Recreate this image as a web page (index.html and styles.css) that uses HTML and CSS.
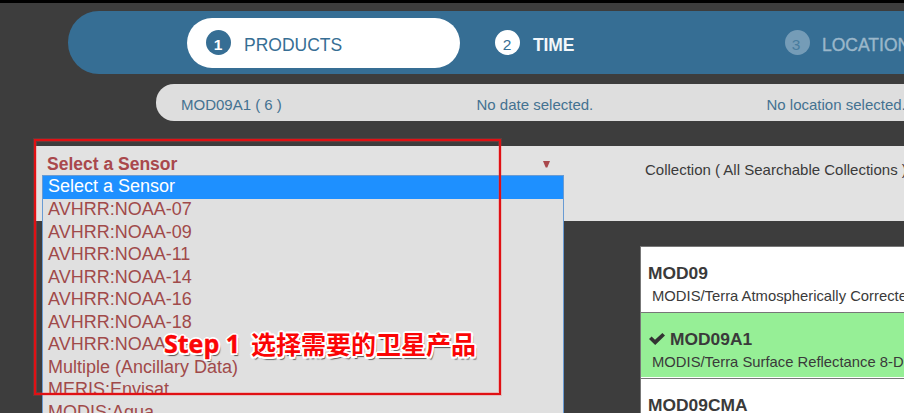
FILE: index.html
```html
<!DOCTYPE html>
<html lang="zh">
<head>
<meta charset="utf-8">
<title>Products</title>
<link rel="stylesheet" href="styles.css">
</head>
<body>
<nav class="steps">
  <div class="step active"><span class="num">1</span><span class="label">PRODUCTS</span></div>
  <div class="step time"><span class="num">2</span><span class="label">TIME</span></div>
  <div class="step disabled"><span class="num">3</span><span class="label">LOCATION</span></div>
</nav>
<div class="status">
  <span class="status-product">MOD09A1 ( 6 )</span>
  <span class="status-date">No date selected.</span>
  <span class="status-location">No location selected.</span>
</div>
<section class="filters">
  <div class="sensor">
    <span>Select a Sensor</span>
    <svg class="arrow" width="7" height="7" viewBox="0 0 7 7"><path d="M0 0H7L4.3 6.5H2.7Z" fill="#a9484c"/></svg>
    <ul class="options">
      <li class="selected">Select a Sensor</li>
      <li>AVHRR:NOAA-07</li>
      <li>AVHRR:NOAA-09</li>
      <li>AVHRR:NOAA-11</li>
      <li>AVHRR:NOAA-14</li>
      <li>AVHRR:NOAA-16</li>
      <li>AVHRR:NOAA-18</li>
      <li>AVHRR:NOAA</li>
      <li>Multiple (Ancillary Data)</li>
      <li>MERIS:Envisat</li>
      <li>MODIS:Aqua</li>
    </ul>
  </div>
  <div class="collection">Collection ( All Searchable Collections )</div>
</section>
<main class="products">
  <article class="product"><h2>MOD09</h2><p>MODIS/Terra Atmospherically Corrected</p></article>
  <article class="product chosen">
    <h2><svg class="check" width="16" height="12" viewBox="0 0 16 12"><path d="M0 6L2.6 3.6L6 6.8L13.4 0L16 2.5L6.2 12Z" fill="#333"/></svg>MOD09A1</h2>
    <p>MODIS/Terra Surface Reflectance 8-Day</p>
  </article>
  <article class="product"><h2>MOD09CMA</h2></article>
</main>
<div class="highlight"></div>
<div class="callout"><span class="callout-step">Step 1</span><span>选择需要的卫星产品</span></div>
</body>
</html>
```
FILE: styles.css
```css
* { box-sizing: border-box; }
html { overflow: hidden; }
body {
  margin: 0;
  height: 413px;
  overflow: hidden;
  position: relative;
  border-top: 3px solid #000;
  background: #3d3d3d;
  color: #3a3a3a;
  font-family: "Liberation Sans", Arial, sans-serif;
  white-space: nowrap;
}
.steps {
  display: flex;
  height: 63px;
  margin: 8px 0 0 68px;
  padding: 7px 0 0 119px;
  border-radius: 31px 0 0 31px;
  background: #366e94;
}
.step {
  display: flex;
  flex: none;
  height: 50px;
  padding-top: 12px;
  color: #f3f7fa;
  font-size: 17.5px;
}
.active {
  width: 273px;
  padding-left: 19px;
  border-radius: 25px;
  background: #fff;
  color: #366e94;
}
.time { width: 290px; padding-left: 35px; }
.disabled { padding-left: 35px; color: #9bb7ca; }
.num {
  flex: none;
  width: 25px;
  height: 25px;
  border-radius: 50%;
  background: #fff;
  color: #366e94;
  font-size: 15.5px;
  line-height: 29px;
  text-align: center;
}
.active .num { background: #366e94; color: #fff; font-weight: bold; padding-right: 1px; }
.time .num { padding-right: 1px; }
.disabled .num { background: #759cb7; color: #487c9e; padding-right: 3px; }
.label { margin-left: 13px; line-height: 30px; }
.time .label { font-weight: bold; letter-spacing: -0.1px; }
.disabled .label { margin-left: 12px; -webkit-text-stroke: 0.4px #9bb7ca; }
.status {
  display: flex;
  height: 37px;
  margin: 10px 0 0 156px;
  padding-left: 25px;
  border-radius: 18px 0 0 18px;
  background: #dedede;
  color: #447291;
  font-size: 15px;
  line-height: 42px;
}
.status span { flex: none; }
.status-product { width: 295.5px; }
.status-date { width: 290px; }
.filters {
  display: flex;
  height: 75px;
  margin: 25px 0 0 36px;
  background: #e2e2e2;
}
.sensor {
  position: relative;
  flex: none;
  display: flex;
  justify-content: space-between;
  width: 528px;
  padding: 8px 14px 0 11px;
  color: #a9484c;
  font-size: 17.5px;
  font-weight: bold;
  line-height: 20px;
}
.arrow { margin-top: 7px; }
.options {
  position: absolute;
  left: 6px;
  top: 29px;
  width: 522px;
  height: 238px;
  margin: 0;
  padding: 0;
  overflow: hidden;
  list-style: none;
  border: 1px solid #699bd3;
  border-bottom: 0;
  background: #e0e0e0;
  color: #a04a4a;
  font-size: 18px;
  font-weight: normal;
}
.options li { height: 22.5px; padding-left: 5px; line-height: 21px; }
.options .selected { height: 23px; background: #1e90ff; color: #fff; }
.collection { margin-left: 81px; font-size: 15px; line-height: 48px; }
.products {
  height: 167px;
  overflow: hidden;
  margin: 25px 0 0 640px;
  border: 1px solid #777;
  border-width: 1px 0 0 1px;
  background: #fff;
}
.product { height: 66px; padding: 14px 0 0 7px; border-bottom: 1px solid #777; }
.chosen { background: #96ef96; box-shadow: inset 0 -1px #fff; }
.product h2 { display: flex; margin: 0; font-size: 17.4px; line-height: 24px; }
.product p { margin: 0 0 0 4px; font-size: 14.8px; line-height: 22px; }
.check { margin: 6px 5px 0 1px; }
.highlight {
  position: absolute;
  left: 34px;
  top: 136px;
  width: 467px;
  height: 256px;
  border: 2px solid #e01014;
  box-shadow: 0 0 0 1px rgba(235, 60, 60, 0.2), inset 0 0 0 1px rgba(255, 60, 60, 0.25);
}
.callout {
  position: absolute;
  left: 164px;
  top: 322px;
  display: flex;
  color: #fb0505;
  font: bold 25px/36px "Noto Sans CJK SC", sans-serif;
  text-shadow:
    2px 0 #fff, -2px 0 #fff, 0 2px #fff, 0 -2px #fff,
    1.5px 1.5px #fff, -1.5px 1.5px #fff, 1.5px -1.5px #fff, -1.5px -1.5px #fff,
    2px 3px 1px #555;
}
.callout-step {
  width: 87px;
  font-family: "Open Sans", sans-serif;
  font-size: 25px;
  -webkit-text-stroke: 0.4px #fb0505;
}
```
